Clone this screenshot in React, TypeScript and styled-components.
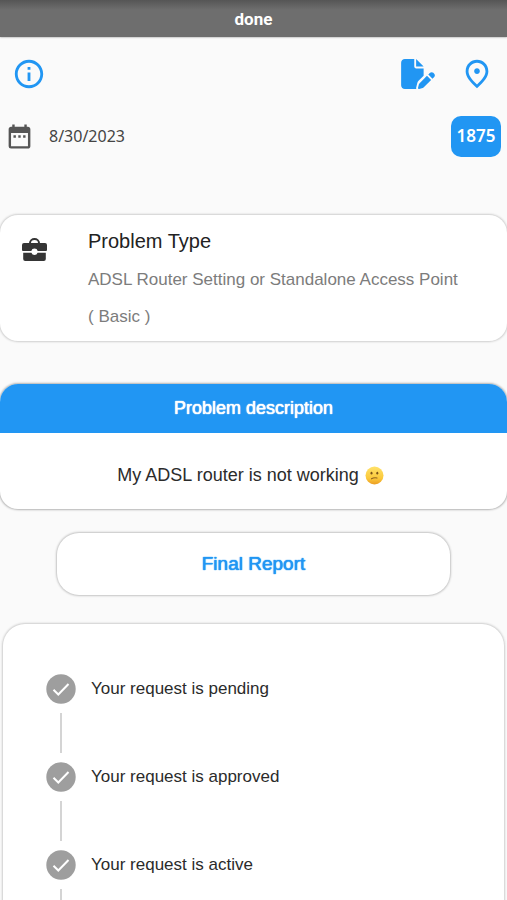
import React from "react";
import styled, { createGlobalStyle } from "styled-components";
import { MdDateRange, MdInfoOutline, MdOutlinePlace } from "react-icons/md";
import { FaFilePen } from "react-icons/fa6";

const BLUE = "#2196f3";

const GlobalStyle = createGlobalStyle`
  * { box-sizing: border-box; }
  body {
    margin: 0;
    background: #fafafa;
    color: #2b2b2b;
    font-family: "Liberation Sans", Arial, sans-serif;
    overflow-x: hidden;
  }
  h1, h2, p, ol { margin: 0; padding: 0; font-weight: 400; }
`;

const Page = styled.main`
  display: flex;
  flex-direction: column;
  height: 100vh;
  overflow-x: hidden;
  overflow-y: auto;
  scrollbar-width: none;
`;

const StatusBar = styled.header`
  flex: none;
  height: 37px;
  display: flex;
  align-items: center;
  justify-content: center;
  background: linear-gradient(#555 0, #6e6e6e 10px, #6e6e6e 100%);
  box-shadow: 0 0 2px #888;
`;

const StatusTitle = styled.h1`
  font: 700 17px/22px Roboto, sans-serif;
  color: #fff;
`;

const Toolbar = styled.nav`
  flex: none;
  display: flex;
  align-items: center;
  height: 74px;
  padding: 0 13px 0 12px;
`;

const ToolbarEnd = styled.div`
  display: flex;
  align-items: center;
  gap: 25px;
  margin-left: auto;
`;

const IconButton = styled.button`
  display: flex;
  padding: 0;
  border: 0;
  background: none;
  color: ${BLUE};
  cursor: pointer;
`;

const EditIcon = styled(FaFilePen)`
  width: 34px;
  height: 30px;
`;

const MetaRow = styled.section`
  flex: none;
  display: flex;
  align-items: center;
  height: 50px;
  padding: 0 6px 0 5px;
  color: #555;
`;

const DateText = styled.time`
  margin-left: 15px;
  font: 400 16px/24px "Noto Sans", sans-serif;
  color: #444;
`;

const TicketBadge = styled.span`
  display: flex;
  align-items: center;
  justify-content: center;
  min-width: 50px;
  height: 41px;
  margin-left: auto;
  border-radius: 10px;
  background: ${BLUE};
  color: #fff;
  font: 600 17px/24px "Noto Sans", sans-serif;
`;

const Card = styled.section<{ $strong?: boolean }>`
  flex: none;
  border-radius: 18px;
  background: #fff;
  overflow: hidden;
  box-shadow: 0 0 2px 1px ${(p) => (p.$strong ? "#b4b4b4" : "#cecece")};
`;

const ProblemCard = styled(Card)`
  display: flex;
  min-height: 125px;
  margin-top: 54px;
  padding: 12px 40px 6px 21px;
  gap: 40px;
`;

const CardIcon = styled.span`
  flex: none;
  padding-top: 11px;
`;

const CardTitle = styled.h2`
  font-size: 20px;
  line-height: 28px;
  color: #222;
`;

const CardText = styled.p`
  padding-top: 6px;
  font-size: 17px;
  line-height: 37px;
  color: #7c7c7c;
`;

const DescriptionCard = styled(Card)`
  margin-top: 43px;
  text-align: center;
`;

const DescriptionTitle = styled.h2`
  font-size: 18px;
  line-height: 49px;
  background: ${BLUE};
  color: #fff;
  text-shadow: 0 0 1px #fff, 0 0 1px #fff;
`;

const DescriptionText = styled.p`
  display: flex;
  align-items: center;
  justify-content: center;
  gap: 6px;
  padding: 24px 26px 16px 20px;
  font-size: 18px;
  line-height: 36px;
`;

const ReportButton = styled.button`
  flex: none;
  height: 62px;
  margin: 24px 57px 0;
  border: 0;
  border-radius: 22px;
  background: #fff;
  box-shadow: 0 0 2px 1px #c4c4c4;
  font-family: inherit;
  font-size: 19px;
  color: ${BLUE};
  text-shadow: 0 0 1px ${BLUE}, 0 0 1px ${BLUE};
  cursor: pointer;
`;

const ProgressCard = styled(Card)`
  margin: 29px 3px 0;
  padding: 50px 43px;
  border-radius: 22px;
`;

const Steps = styled.ol`
  list-style: none;
`;

const Step = styled.li`
  display: grid;
  grid-template-columns: 30px 1fr;
  column-gap: 15px;
  height: 88px;
  font-size: 17px;
  line-height: 30px;
  align-content: start;

  &::after {
    content: "";
    width: 2px;
    height: 40px;
    margin: 9px auto 0;
    background: #d4d4d4;
  }
`;

const Briefcase = () => (
  <svg width="27" height="25" viewBox="0 0 27 25" aria-hidden="true">
    <path d="M9 6V5a4.5 4 0 0 1 9 0v1" fill="none" stroke="#353535" strokeWidth="2" />
    <path
      d="M3 5h21q2 0 2 2v5q0 1-1 1h-8.3a3.3 3.3 0 0 0-6.4 0H2q-1 0-1-1V7q0-2 2-2z"
      fill="#353535"
    />
    <path
      d="M2.2 14.8h8.2a3.3 3.3 0 0 0 6.2 0h8.2V21q0 2-2 2H4.200q-2 0-2-2z"
      fill="#353535"
    />
  </svg>
);

const ConfusedFace = () => (
  <svg width="19" height="19" viewBox="0 0 19 19" role="img" aria-label="confused face">
    <defs>
      <linearGradient id="face" x1="0" y1="0" x2="0" y2="1">
        <stop offset="0" stopColor="#ffe26a" />
        <stop offset="0.65" stopColor="#fbc93b" />
        <stop offset="1" stopColor="#eb9d23" />
      </linearGradient>
    </defs>
    <circle cx="9.5" cy="9.5" r="9" fill="url(#face)" />
    <ellipse cx="6.5" cy="7.2" rx="1" ry="1.4" fill="#7b5216" />
    <ellipse cx="12.3" cy="7.2" rx="1" ry="1.4" fill="#7b5216" />
    <path d="M6.500 12.800q2.500-1.600 5.500-.8" fill="none" stroke="#8f6220" strokeWidth="1.1" strokeLinecap="round" />
  </svg>
);

const StepTick = () => (
  <svg width="30" height="30" viewBox="0 0 30 30" aria-hidden="true">
    <circle cx="15" cy="15" r="14.7" fill="#9e9e9e" />
    <path d="M7.500 15.800l4.800 4.700L22.500 10" fill="none" stroke="#fff" strokeWidth="2" />
  </svg>
);

const steps = [
  "Your request is pending",
  "Your request is approved",
  "Your request is active",
];

export default function App() {
  return (
    <>
      <GlobalStyle />
      <Page>
        <StatusBar>
          <StatusTitle>done</StatusTitle>
        </StatusBar>
        <Toolbar>
          <IconButton aria-label="Information">
            <MdInfoOutline size={34} />
          </IconButton>
          <ToolbarEnd>
            <IconButton aria-label="Edit report">
              <EditIcon />
            </IconButton>
            <IconButton aria-label="Location">
              <MdOutlinePlace size={34} />
            </IconButton>
          </ToolbarEnd>
        </Toolbar>
        <MetaRow>
          <MdDateRange size={29} />
          <DateText dateTime="2023-08-30">8/30/2023</DateText>
          <TicketBadge>1875</TicketBadge>
        </MetaRow>
        <ProblemCard>
          <CardIcon>
            <Briefcase />
          </CardIcon>
          <div>
            <CardTitle>Problem Type</CardTitle>
            <CardText>ADSL Router Setting or Standalone Access Point ( Basic )</CardText>
          </div>
        </ProblemCard>
        <DescriptionCard $strong>
          <DescriptionTitle>Problem description</DescriptionTitle>
          <DescriptionText>
            My ADSL router is not working
            <ConfusedFace />
          </DescriptionText>
        </DescriptionCard>
        <ReportButton>Final Report</ReportButton>
        <ProgressCard>
          <Steps>
            {steps.map((label) => (
              <Step key={label}>
                <StepTick />
                <span>{label}</span>
              </Step>
            ))}
          </Steps>
        </ProgressCard>
      </Page>
    </>
  );
}
